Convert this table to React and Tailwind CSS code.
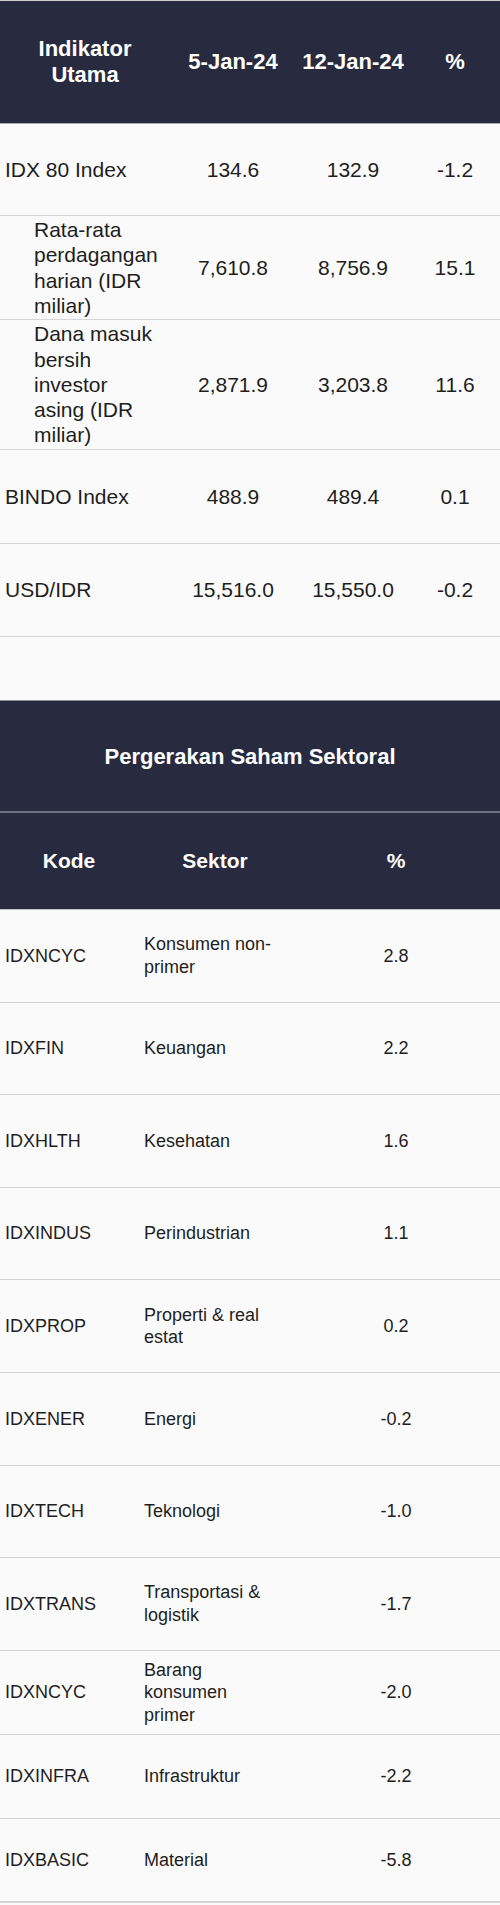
import React from 'react'

const indikator = [
    { name: 'IDX 80 Index', a: '134.6', b: '132.9', pct: '-1.2', h: 'h-[92px]', indent: false },
    { name: 'Rata-rata perdagangan harian (IDR miliar)', a: '7,610.8', b: '8,756.9', pct: '15.1', h: 'h-[104px]', indent: true },
    { name: 'Dana masuk bersih investor asing (IDR miliar)', a: '2,871.9', b: '3,203.8', pct: '11.6', h: 'h-[130px]', indent: true },
    { name: 'BINDO Index', a: '488.9', b: '489.4', pct: '0.1', h: 'h-[94px]', indent: false },
    { name: 'USD/IDR', a: '15,516.0', b: '15,550.0', pct: '-0.2', h: 'h-[93px]', indent: false },
]

const sektor = [
    { kode: 'IDXNCYC', nama: 'Konsumen non-primer', pct: '2.8' },
    { kode: 'IDXFIN', nama: 'Keuangan', pct: '2.2' },
    { kode: 'IDXHLTH', nama: 'Kesehatan', pct: '1.6' },
    { kode: 'IDXINDUS', nama: 'Perindustrian', pct: '1.1' },
    { kode: 'IDXPROP', nama: 'Properti & real estat', pct: '0.2' },
    { kode: 'IDXENER', nama: 'Energi', pct: '-0.2' },
    { kode: 'IDXTECH', nama: 'Teknologi', pct: '-1.0' },
    { kode: 'IDXTRANS', nama: 'Transportasi & logistik', pct: '-1.7' },
    { kode: 'IDXNCYC', nama: 'Barang konsumen primer', pct: '-2.0', short: true },
    { kode: 'IDXINFRA', nama: 'Infrastruktur', pct: '-2.2', short: true },
    { kode: 'IDXBASIC', nama: 'Material', pct: '-5.8', short: true, last: true },
]

const App = () => {
    return (
        <div className="min-h-screen w-[500px] bg-[#fafafa] text-[#1e1e1e] font-['Liberation_Sans',Arial,sans-serif]">
            {/* Indikator Utama */}
            <div className="border-t border-[#cfcfcf]">
                <div className="grid grid-cols-[170px_126px_114px_90px] h-[123px] items-center bg-[#282b3f] border-b border-[#a9abb3] text-white text-[22px] font-bold text-center leading-[26px]">
                    <div>Indikator<br />Utama</div>
                    <div>5-Jan-24</div>
                    <div>12-Jan-24</div>
                    <div>%</div>
                </div>

                {indikator.map((row) => (
                    <div
                        key={row.name}
                        className={`grid grid-cols-[170px_126px_114px_90px] items-center border-b border-[#d6d6d6] text-[21px] leading-[25.3px] ${row.h}`}
                    >
                        <div className={row.indent ? 'pl-[34px] pr-[9px]' : 'pl-[5px]'}>{row.name}</div>
                        <div className="text-center">{row.a}</div>
                        <div className="text-center">{row.b}</div>
                        <div className="text-center">{row.pct}</div>
                    </div>
                ))}
            </div>

            <div className="h-[63px]" />

            {/* Pergerakan Saham Sektoral */}
            <div className="border-t border-[#8d8f99]">
                <div className="h-[112px] flex items-center justify-center bg-[#282b3f] text-white text-[22px] font-bold border-b-2 border-[#6e717f]">
                    Pergerakan Saham Sektoral
                </div>
                <div className="grid grid-cols-[138px_154px_208px] h-[97px] items-center bg-[#282b3f] text-white text-[21px] font-bold text-center border-b border-[#c4c5ca]">
                    <div>Kode</div>
                    <div>Sektor</div>
                    <div>%</div>
                </div>

                {sektor.map((row, i) => (
                    <div
                        key={i}
                        className={`grid grid-cols-[138px_154px_208px] items-center text-[18px] leading-[22.5px] border-[#d3d3d3] ${row.short ? 'h-[84px]' : 'h-[92.6px]'} ${row.last ? 'border-b-2' : 'border-b'}`}
                    >
                        <div className="pl-[5px]">{row.kode}</div>
                        <div className="pl-[6px] pr-[12px]">{row.nama}</div>
                        <div className="text-center">{row.pct}</div>
                    </div>
                ))}
            </div>
        </div>
    )
}

export default App
